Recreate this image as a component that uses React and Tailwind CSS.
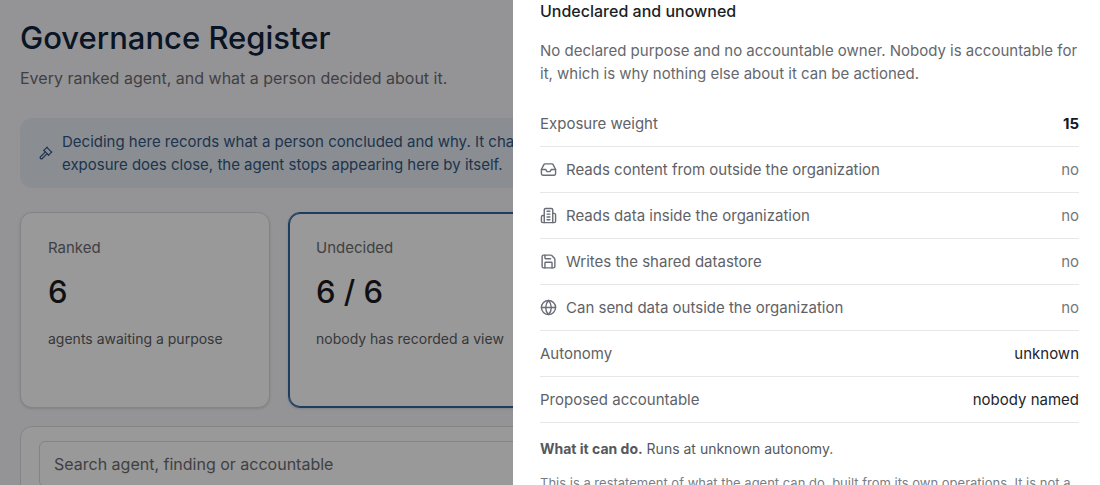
import { Gavel, Globe, Inbox, Save } from 'lucide-react';

const STATS = [
  { label: 'Ranked', value: '6', note: 'agents awaiting a purpose' },
  { label: 'Undecided', value: '6 / 6', note: 'nobody has recorded a view', active: true },
];

function BuildingIcon({ className }) {
  return (
    <svg
      viewBox="0 0 24 24"
      fill="none"
      stroke="currentColor"
      strokeWidth="2"
      strokeLinecap="round"
      strokeLinejoin="round"
      className={className}
      aria-hidden="true"
    >
      <path d="M6 22V4a2 2 0 0 1 2-2h8a2 2 0 0 1 2 2v18Z" />
      <path d="M6 12H4a2 2 0 0 0-2 2v6a2 2 0 0 0 2 2h2" />
      <path d="M18 9h2a2 2 0 0 1 2 2v9a2 2 0 0 1-2 2h-2" />
      <path d="M10 6h4M10 10h4M10 14h4M10 18h4" />
    </svg>
  );
}

const FACTS = [
  { label: 'Exposure weight', value: '15', valueClass: 'font-bold text-[#16181d]' },
  { label: 'Reads content from outside the organization', value: 'no', icon: Inbox },
  { label: 'Reads data inside the organization', value: 'no', icon: BuildingIcon },
  { label: 'Writes the shared datastore', value: 'no', icon: Save },
  { label: 'Can send data outside the organization', value: 'no', icon: Globe },
  { label: 'Autonomy', value: 'unknown', valueClass: 'text-[#22252b]' },
  { label: 'Proposed accountable', value: 'nobody named', valueClass: 'text-[#22252b]' },
];

function StatCard({ label, value, note, active }) {
  return (
    <button
      type="button"
      className={`flex min-h-[196px] flex-col items-start rounded-xl border bg-white px-[27px] pt-[25px] text-left shadow-sm ${
        active ? 'border-[#2f669f] ring-1 ring-[#2f669f] ring-inset' : 'border-[#dcdce2]'
      }`}
    >
      <span className="text-[15px] leading-5 text-[#6c6c70]">{label}</span>
      <span className="mt-[14px] text-[31px] leading-10 font-medium text-[#1c1c1e]">{value}</span>
      <span className="mt-[17px] text-sm leading-5 whitespace-nowrap text-[#5c5c60]">{note}</span>
    </button>
  );
}

function FactRow({ label, value, icon: Icon, valueClass = 'text-[#74777d]' }) {
  return (
    <div className="flex h-[46px] items-center justify-between border-b border-[#e6e7e9] text-[15px] leading-6">
      <dt className="flex items-center gap-[9px] text-[#5f6267]">
        {Icon && <Icon className="h-[17px] w-[17px] text-[#6b6e78]" />}
        {label}
      </dt>
      <dd className={valueClass}>{value}</dd>
    </div>
  );
}

function RegisterPage() {
  return (
    <main className="pt-4 pr-[26px] pl-5">
      <h1 className="text-[31px] leading-11 font-medium text-[#12233d]">Governance Register</h1>
      <p className="mt-1 text-base leading-7 text-[#6c6c70]">
        Every ranked agent, and what a person decided about it.
      </p>

      <div className="mt-[26px] flex items-center gap-[9px] rounded-xl bg-[#e6edf5] px-[19px] py-3 text-[#34577f]">
        <Gavel className="h-3.5 w-3.5 shrink-0" />
        <p className="text-[15px] leading-[23px]">
          Deciding here records what a person concluded and why. It changes no exposure. When the
          <br />
          exposure does close, the agent stops appearing here by itself.
        </p>
      </div>

      <div className="mt-6 grid grid-cols-4 gap-[18px]">
        {STATS.map((stat) => (
          <StatCard key={stat.label} {...stat} />
        ))}
      </div>

      <div className="mt-[18px] rounded-xl border border-[#dcdce2] bg-white px-[18px] py-3.5">
        <input
          type="search"
          aria-label="Search agent, finding or accountable"
          placeholder="Search agent, finding or accountable"
          className="h-[46px] w-full rounded-md border border-[#dcdce2] px-3.5 text-base outline-none placeholder:text-[#6c6c70]"
        />
      </div>
    </main>
  );
}

function AgentDrawer() {
  return (
    <aside
      role="dialog"
      aria-label="Undeclared and unowned"
      className="fixed inset-y-0 right-0 w-[587px] max-w-full overflow-hidden bg-white pr-[21px] pl-[27px]"
    >
      <h2 className="text-base leading-[22px] font-medium text-[#1c1f24]">Undeclared and unowned</h2>
      <p className="mt-[17px] text-[15px] leading-[23px] text-[#65686d]">
        No declared purpose and no accountable owner. Nobody is accountable for it, which is why nothing
        else about it can be actioned.
      </p>

      <dl className="mt-4">
        {FACTS.map((fact) => (
          <FactRow key={fact.label} {...fact} />
        ))}
      </dl>

      <p className="mt-4 text-sm leading-5 text-[#55585d]">
        <strong>What it can do.</strong> Runs at unknown autonomy.
      </p>
      <p className="mt-[14px] text-[13px] leading-5 text-[#7a7d85]">
        This is a restatement of what the agent can do, built from its own operations. It is not a
        judgement of what it should do.
      </p>
    </aside>
  );
}

export default function App() {
  return (
    <div className="h-screen overflow-hidden bg-[#f7f7fa] font-[Inter,sans-serif]">
      <RegisterPage />
      <div className="fixed inset-0 bg-black/40" />
      <AgentDrawer />
    </div>
  );
}
